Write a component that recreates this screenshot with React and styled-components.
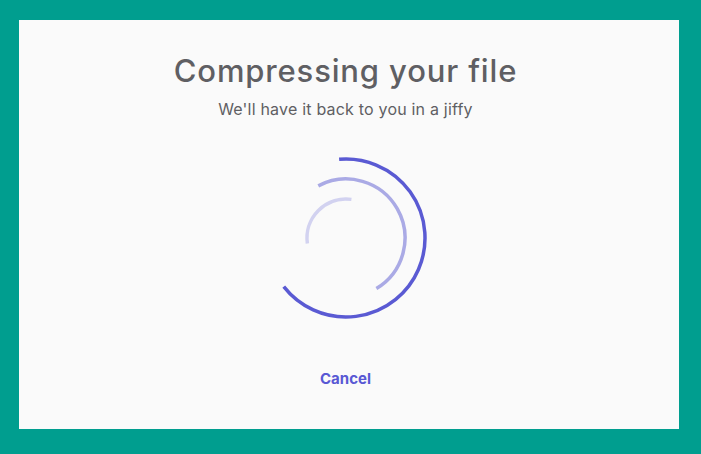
import styled, { createGlobalStyle } from "styled-components";

const Global = createGlobalStyle`
    html, body {
        margin: 0;
        background: #009e8f;
    }
    body {
        font-family: "Inter", "Liberation Sans", sans-serif;
    }
`;

const Page = styled.div`
    padding: 20px 22px 25px 19px;
`;
const Panel = styled.div`
    box-sizing: border-box;
    width: 660px;
    height: 409px;
    background: #fafafa;
    padding: 31px 7px 0 0;
    display: flex;
    flex-direction: column;
    align-items: center;
`;
const Title = styled.h1`
    margin: 0;
    font-size: 31px;
    line-height: 40px;
    font-weight: 500;
    color: #5f5f63;
    letter-spacing: 0.85px;
`;
const Subtitle = styled.p`
    margin: 8px 0 0;
    font-size: 16px;
    line-height: 20px;
    color: #5f5f63;
    letter-spacing: 0.2px;
`;
const Spinner = styled.svg`
    margin-top: 29px;
    display: block;
`;
const CancelButton = styled.button`
    margin-top: 41px;
    padding: 0;
    border: 0;
    background: none;
    font-family: inherit;
    font-size: 15px;
    line-height: 20px;
    font-weight: 700;
    color: #5858d4;
    cursor: pointer;
`;

const arc = (cx, cy, r, from, to) => {
    const rad = a => (a * Math.PI) / 180;
    const x1 = cx + r * Math.cos(rad(from));
    const y1 = cy + r * Math.sin(rad(from));
    const x2 = cx + r * Math.cos(rad(to));
    const y2 = cy + r * Math.sin(rad(to));
    const large = to - from > 180 ? 1 : 0;
    return `M${x1} ${y1} A${r} ${r} 0 ${large} 1 ${x2} ${y2}`;
};

const rings = [
    { r: 79, from: 265, to: 502, color: "#5a5ad3" },
    { r: 59, from: 242, to: 419, color: "#aaaae5" },
    { r: 39, from: 172, to: 278, color: "#d2d2f0" },
];

export default () => <>
    <Global />
    <Page>
        <Panel>
            <Title>Compressing your file</Title>
            <Subtitle>We'll have it back to you in a jiffy</Subtitle>
            <Spinner width="180" height="180" viewBox="0 0 180 180">
                {rings.map(ring => <path
                    key={ring.r}
                    d={arc(90, 90, ring.r, ring.from, ring.to)}
                    fill="none"
                    stroke={ring.color}
                    strokeWidth="3.5"
                />)}
            </Spinner>
            <CancelButton>Cancel</CancelButton>
        </Panel>
    </Page>
</>
